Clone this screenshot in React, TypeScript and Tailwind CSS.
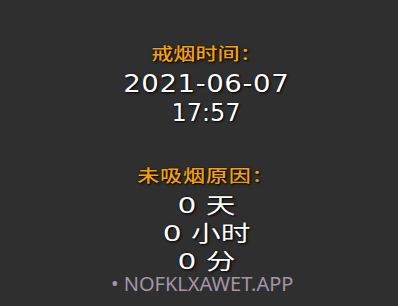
const shadow = '[text-shadow:1px_1px_2px_#000,0_0_1px_#000]';

const App = () => {
  return (
    <div className="relative w-[398px] h-[306px] overflow-hidden bg-[#2f2f2f] flex flex-col items-center pl-[14px] pt-[39px] font-['DejaVu_Sans','Noto_Sans_CJK_SC',sans-serif]">
      <div className={`h-[28px] leading-[28px] text-[17px] font-medium text-[#f5a300] font-['Noto_Sans_CJK_SC',sans-serif] inline-block scale-x-[1.3] ${shadow}`}>
        戒烟时间：
      </div>

      <div className={`mt-[3px] h-[29px] leading-[29px] text-[24px] tracking-[0.5px] text-white inline-block scale-x-[1.15] ${shadow}`}>
        2021-06-07
      </div>
      <div className={`h-[29px] leading-[29px] text-[24px] text-white ${shadow}`}>17:57</div>

      <div className={`mt-[33px] h-[28px] leading-[28px] text-[17px] font-medium tracking-[0.6px] text-[#f5a300] font-['Noto_Sans_CJK_SC',sans-serif] inline-block scale-x-[1.3] ${shadow}`}>
        未吸烟原因：
      </div>

      <div className="mt-[3px] flex flex-col items-center text-white">
        {['0 天', '0 小时', '0 分'].map((line) => (
          <div key={line} className={`h-[28px] leading-[28px] text-[22px] inline-block scale-x-[1.35] ${shadow}`}>
            {line}
          </div>
        ))}
      </div>

      <div className="absolute left-[111px] top-[271px] text-[20px] leading-[26px] text-[#a395a6] font-['Noto_Sans',sans-serif]">
        • NOFKLXAWET.APP
      </div>
    </div>
  );
};

export default App;
